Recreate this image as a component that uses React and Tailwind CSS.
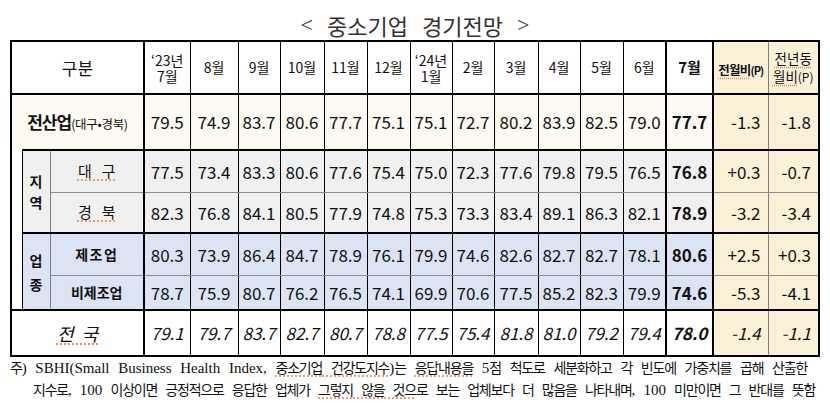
import React from "react";

const SANS = "font-['Noto_Sans_CJK_KR','Noto_Sans',sans-serif]";
const B2 = "border-b-2 border-b-black";
const G1 = "border-b border-b-[#8c8c8c]";
const UL = "underline decoration-dotted decoration-[#e8843c] underline-offset-[3px]";

const GREY = "bg-[#f0f0f0]";
const BLUE = "bg-[#dce3f3]";
const CREAM = "bg-[#fdfaf3]";
const BEIGE = "bg-[#fbf0d8]";

function DataCells({ vals, cur, d1, d2, bg, bottom, italic }) {
  const it = italic ? "italic" : "";
  return (
    <>
      {vals.map((v, i) => (
        <td
          key={i}
          className={`${bg} ${bottom} ${i === 11 ? "border-r-2 border-r-black" : "border-r border-r-black"} p-0 text-center text-[17px] ${it}`}
        >
          {v}
        </td>
      ))}
      <td className={`${bg} ${bottom} border-r-2 border-r-black p-0 text-center text-[17px] font-bold ${it}`}>{cur}</td>
      <td className={`${BEIGE} ${bottom} border-r border-r-[#7f7f7f] p-0 pr-[7px] text-right text-[17px] ${it}`}>{d1}</td>
      <td className={`${BEIGE} ${bottom} p-0 pr-[7px] text-right text-[17px] ${it}`}>{d2}</td>
    </>
  );
}

function KR({ text, ul }) {
  const parts = text.split(/([\uAC00-\uD7A3]+)/);
  return (
    <span className={ul ? UL : ""}>
      {parts.map((s, i) =>
        /[\uAC00-\uD7A3]/.test(s) ? (
          <span key={i} className="font-['Noto_Sans_CJK_KR',sans-serif] text-[14px] tracking-[-1.2px]">
            {s}
          </span>
        ) : (
          <span key={i}>{s}</span>
        )
      )}
    </span>
  );
}

const months = ["8월", "9월", "10월", "11월", "12월"];
const months2 = ["2월", "3월", "4월", "5월", "6월"];

export default function App() {
  const rows = {
    all: ["79.5", "74.9", "83.7", "80.6", "77.7", "75.1", "75.1", "72.7", "80.2", "83.9", "82.5", "79.0"],
    dg: ["77.5", "73.4", "83.3", "80.6", "77.6", "75.4", "75.0", "72.3", "77.6", "79.8", "79.5", "76.5"],
    gb: ["82.3", "76.8", "84.1", "80.5", "77.9", "74.8", "75.3", "73.3", "83.4", "89.1", "86.3", "82.1"],
    mf: ["80.3", "73.9", "86.4", "84.7", "78.9", "76.1", "79.9", "74.6", "82.6", "82.7", "82.7", "78.1"],
    nm: ["78.7", "75.9", "80.7", "76.2", "76.5", "74.1", "69.9", "70.6", "77.5", "85.2", "82.3", "79.9"],
    nat: ["79.1", "79.7", "83.7", "82.7", "80.7", "78.8", "77.5", "75.4", "81.8", "81.0", "79.2", "79.4"],
  };

  const hcell = "border-r border-r-black p-0 text-center text-[14px] " + B2;

  return (
    <div className={`w-[830px] h-[403px] overflow-hidden bg-white text-[#111] ${SANS}`}>
      <div className="h-[40px] pt-[10px] flex items-center justify-center gap-[14px] font-['Liberation_Serif','Noto_Sans_CJK_KR',serif] text-[22px] text-[#333] leading-none">
        <span>&lt;</span>
        <span className={SANS}>중소기업</span>
        <span className={SANS}>경기전망</span>
        <span>&gt;</span>
      </div>

      <table className="ml-[10px] w-[808px] table-fixed border-collapse border-2 border-black leading-tight">
        <colgroup>
          <col className="w-[11px]" />
          <col className="w-[28px]" />
          <col className="w-[94px]" />
          <col className="w-[46px]" />
          <col className="w-[48px]" />
          <col className="w-[42px]" />
          <col className="w-[44px]" />
          <col className="w-[43px]" />
          <col className="w-[43px]" />
          <col className="w-[42px]" />
          <col className="w-[42px]" />
          <col className="w-[44px]" />
          <col className="w-[42px]" />
          <col className="w-[43px]" />
          <col className="w-[43px]" />
          <col className="w-[47px]" />
          <col className="w-[55px]" />
          <col className="w-[51px]" />
        </colgroup>
        <tbody>
          <tr className="h-[53px]">
            <td colSpan={3} className={`border-r-2 border-r-black ${B2} p-0 text-center text-[17px]`}>구분</td>
            <td className={hcell}>
              <div className="leading-[16px]">‘23년</div>
              <div className="leading-[16px]">7월</div>
            </td>
            {months.map((m) => (
              <td key={m} className={hcell}>{m}</td>
            ))}
            <td className={hcell}>
              <div className="leading-[16px]">‘24년</div>
              <div className="leading-[16px]">1월</div>
            </td>
            {months2.map((m) => (
              <td key={m} className={m === "6월" ? `border-r-2 border-r-black p-0 text-center text-[14px] ${B2}` : hcell}>{m}</td>
            ))}
            <td className={`border-r-2 border-r-black ${B2} p-0 text-center text-[15px] font-bold`}>7월</td>
            <td className={`${BEIGE} border-r border-r-[#7f7f7f] ${B2} p-0 text-center font-bold whitespace-nowrap`}>
              <span className={`text-[12.5px] tracking-[-0.8px] ${UL}`}>전월비</span>
              <span className="text-[11px] tracking-[-1px]">(P)</span>
            </td>
            <td className={`${BEIGE} ${B2} p-0 text-center text-[13.5px]`}>
              <div className="leading-[18px]"><span className={UL}>전년동</span></div>
              <div className="leading-[18px]"><span className={UL}>월비</span><span className="text-[12px]">(P)</span></div>
            </td>
          </tr>

          <tr className="h-[56px]">
            <td colSpan={3} className={`${CREAM} border-r-2 border-r-black ${B2} p-0 text-center whitespace-nowrap`}>
              <span className="text-[17px] font-bold tracking-[-1px]">전산업</span>
              <span className="text-[12.5px] tracking-[-0.3px]">(대구•경북)</span>
            </td>
            <DataCells vals={rows.all} cur="77.7" d1="-1.3" d2="-1.8" bg={CREAM} bottom={B2} />
          </tr>

          <tr className="h-[42px]">
            <td rowSpan={4} className={`bg-white [border-top-style:hidden] ${B2} p-0`}></td>
            <td rowSpan={2} className={`${GREY} border-l border-l-black border-r border-r-[#7f7f7f] ${B2} p-0 text-center text-[14px] font-bold leading-[21px]`}>
              <div>지</div>
              <div>역</div>
            </td>
            <td className={`${GREY} border-r-2 border-r-black ${G1} p-0 text-center text-[15px]`}>
              <span className={UL}>대&nbsp;&nbsp;&nbsp;구</span>
            </td>
            <DataCells vals={rows.dg} cur="76.8" d1="+0.3" d2="-0.7" bg={GREY} bottom={G1} />
          </tr>

          <tr className="h-[41px]">
            <td className={`${GREY} border-r-2 border-r-black ${B2} p-0 text-center text-[15px]`}>
              <span className={UL}>경&nbsp;&nbsp;&nbsp;북</span>
            </td>
            <DataCells vals={rows.gb} cur="78.9" d1="-3.2" d2="-3.4" bg={GREY} bottom={B2} />
          </tr>

          <tr className="h-[42px]">
            <td rowSpan={2} className={`${BLUE} border-l border-l-black border-r border-r-[#7f7f7f] ${B2} p-0 text-center text-[14px] font-bold leading-[24px]`}>
              <div>업</div>
              <div>종</div>
            </td>
            <td className={`${BLUE} border-r-2 border-r-black ${G1} p-0 text-center text-[14px] font-bold tracking-[1.5px]`}>제조업</td>
            <DataCells vals={rows.mf} cur="80.6" d1="+2.5" d2="+0.3" bg={BLUE} bottom={G1} />
          </tr>

          <tr className="h-[35px]">
            <td className={`${BLUE} border-r-2 border-r-black ${B2} p-0 text-center text-[14px] font-bold`}>비제조업</td>
            <DataCells vals={rows.nm} cur="74.6" d1="-5.3" d2="-4.1" bg={BLUE} bottom={B2} />
          </tr>

          <tr className="h-[46px]">
            <td colSpan={3} className="border-r-2 border-r-black p-0 text-center text-[18px] italic">
              <span className={UL}>전&nbsp;&nbsp;국</span>
            </td>
            <DataCells vals={rows.nat} cur="78.0" d1="-1.4" d2="-1.1" bg="bg-white" bottom="" italic />
          </tr>
        </tbody>
      </table>

      <div className="font-['Liberation_Serif','Noto_Sans_CJK_KR',serif] text-[15px] leading-[21px] text-[#111]">
        <div className="ml-[10px] w-[797px] text-justify [text-align-last:justify]">
          <KR text="주) SBHI(Small Business Health Index, " />
          <KR text="중소기업 건강도지수" ul />
          <KR text=")는 " />
          <KR text="응답내용을" ul />
          <KR text=" 5점 척도로 세분화하고 각 빈도에 가중치를 곱해 산출한" />
        </div>
        <div className="ml-[33px] w-[782px] text-justify [text-align-last:justify]">
          <KR text="지수로, 100 이상이면 긍정적으로 응답한 업체가 " />
          <KR text="그렇지 않을 것으" ul />
          <KR text="로 보는 업체보다 더 많음을 나타내며, 100 미만이면 그 반대를 뜻함" />
        </div>
      </div>
    </div>
  );
}
